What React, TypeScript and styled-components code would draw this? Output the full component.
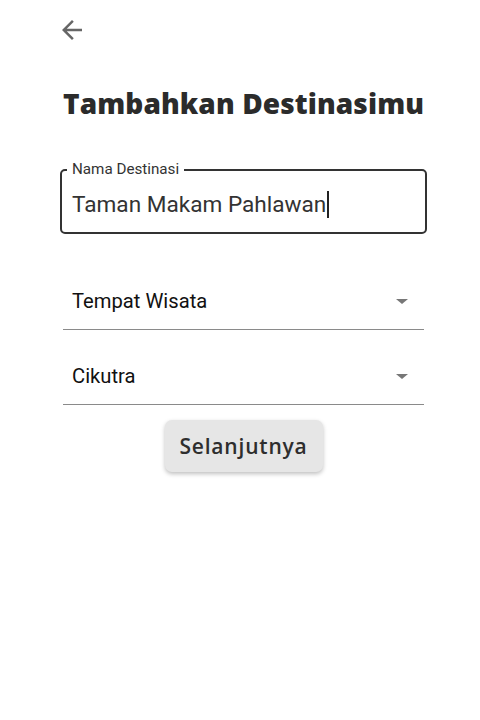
import styled, { createGlobalStyle } from 'styled-components';

const GlobalStyle = createGlobalStyle`
  * { box-sizing: border-box; }
  body {
    margin: 0;
    background: #fff;
    font-family: Roboto, "Liberation Sans", sans-serif;
  }
`;

function App() {
  return (
    <Page>
      <GlobalStyle />
      <BackButton aria-label="back">
        <svg width="30" height="30" viewBox="0 0 24 24">
          <path d="M20 11H7.83l5.59-5.59L12 4l-8 8 8 8 1.41-1.41L7.83 13H20v-2z" fill="#666" />
        </svg>
      </BackButton>
      <Title>Tambahkan Destinasimu</Title>
      <Outlined>
        <Legend>Nama Destinasi</Legend>
        <InputText>
          Taman Makam Pahlawan<Caret />
        </InputText>
      </Outlined>
      <Selects>
        <Select>
          <span>Tempat Wisata</span>
          <Arrow />
        </Select>
        <Select>
          <span>Cikutra</span>
          <Arrow />
        </Select>
      </Selects>
      <ButtonRow>
        <Button>Selanjutnya</Button>
      </ButtonRow>
    </Page>
  );
}

export default App;

const Page = styled.div`
  width: 480px;
  height: 720px;
  padding: 15px 53px 0 60px;
  display: flex;
  flex-direction: column;
`;

const BackButton = styled.button`
  width: 30px;
  height: 30px;
  margin-left: -3px;
  padding: 0;
  border: none;
  background: none;
  display: flex;
  align-items: center;
  justify-content: center;
`;

const Title = styled.h1`
  margin: 38px 0 0 3px;
  font-family: "Open Sans", sans-serif;
  font-size: 28px;
  font-weight: 800;
  line-height: 40px;
  color: #2b2b2b;
  letter-spacing: 0.1px;
`;

const Outlined = styled.div`
  position: relative;
  margin-top: 46px;
  height: 65px;
  border: 2px solid #333;
  border-radius: 5px;
  padding: 0 10px;
  display: flex;
  align-items: center;
`;

const Legend = styled.span`
  position: absolute;
  top: -12px;
  left: 5px;
  padding: 0 5px;
  background: #fff;
  font-size: 15.2px;
  line-height: 20px;
  color: #333;
`;

const InputText = styled.div`
  display: flex;
  align-items: center;
  padding-top: 6px;
  font-size: 22.6px;
  color: #333;
`;

const Caret = styled.span`
  display: inline-block;
  width: 2px;
  height: 27px;
  margin-left: 1px;
  background: #222;
`;

const Selects = styled.div`
  margin: 39px 3px 0;
  display: flex;
  flex-direction: column;
  gap: 18px;
`;

const Select = styled.div`
  height: 57px;
  padding: 0 16px 0 9px;
  border-bottom: 1px solid #8a8a8a;
  display: flex;
  align-items: center;
  justify-content: space-between;
  font-size: 20.2px;
  color: #111;
`;

const Arrow = styled.span`
  width: 0;
  height: 0;
  border-left: 6px solid transparent;
  border-right: 6px solid transparent;
  border-top: 5px solid #777;
`;

const ButtonRow = styled.div`
  margin-top: 15px;
  display: flex;
  justify-content: center;
`;

const Button = styled.button`
  width: 158px;
  height: 52px;
  border: none;
  border-radius: 7px;
  background: #e6e6e6;
  box-shadow: 0 2px 4px rgba(0, 0, 0, 0.25);
  font-family: "Open Sans", sans-serif;
  font-size: 21px;
  font-weight: 600;
  letter-spacing: 0.8px;
  color: #2e2e2e;
`;
